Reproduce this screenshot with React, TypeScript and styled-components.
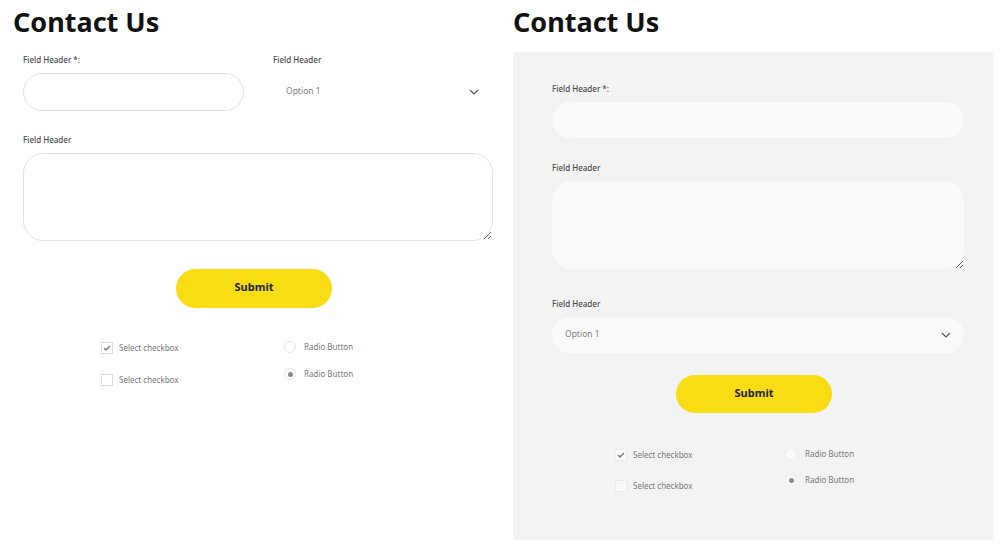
import styled, { createGlobalStyle } from "styled-components";

const GlobalStyle = createGlobalStyle`
  body {
    margin: 0;
    background: #ffffff;
    font-family: "Noto Sans", "Open Sans", sans-serif;
  }
  * { box-sizing: border-box; }
`;

const Page = styled.div`
  display: flex;
  width: 1000px;
  height: 545px;
`;

const Column = styled.section`
  width: 500px;
  padding-left: 13px;
  display: flex;
  flex-direction: column;
`;

const Title = styled.h1`
  margin: 0 0 17px;
  padding-top: 8px;
  font-size: 27px;
  line-height: 27px;
  font-weight: 700;
  color: #111;
`;

const Form = styled.form<{ $variant: "plain" | "card" }>`
  display: flex;
  flex-direction: column;
  ${(p) =>
    p.$variant === "card"
      ? `
    width: 480px;
    height: 488px;
    background: #f3f3f3;
    padding: 32px 29px 0 39px;
  `
      : `
    width: 480px;
    padding: 3px 0 0 10px;
  `}
`;

const Row = styled.div`
  display: grid;
  grid-template-columns: 221px 220px;
  column-gap: 29px;
`;

const Field = styled.div<{ $mb: number }>`
  display: flex;
  flex-direction: column;
  margin-bottom: ${(p) => p.$mb}px;
`;

const Label = styled.label`
  font-size: 8px;
  line-height: 10px;
  font-weight: 500;
  color: #4a4a4a;
  margin-bottom: 8px;
`;

const TextInput = styled.input<{ $filled: boolean; $h: number }>`
  height: ${(p) => p.$h}px;
  width: 100%;
  border-radius: 999px;
  border: ${(p) => (p.$filled ? "none" : "1px solid #e2e2e2")};
  background: ${(p) => (p.$filled ? "#fafafa" : "#fff")};
  outline: none;
  padding: 0 14px;
  font: inherit;
`;

const TextArea = styled.textarea<{ $filled: boolean; $w: number }>`
  display: block;
  width: ${(p) => p.$w}px;
  height: 88px;
  border-radius: 20px;
  border: ${(p) => (p.$filled ? "none" : "1px solid #e2e2e2")};
  background: ${(p) => (p.$filled ? "#fafafa" : "#fff")};
  outline: none;
  padding: 12px 14px;
  font: inherit;
  resize: both;
`;

const SelectWrap = styled.div`
  position: relative;
  width: 100%;
`;

const Select = styled.select<{ $filled: boolean; $h: number }>`
  appearance: none;
  width: 100%;
  height: ${(p) => p.$h}px;
  border: none;
  border-radius: 999px;
  background: ${(p) => (p.$filled ? "#fafafa" : "#fff")};
  padding: 0 13px 3px;
  font-family: inherit;
  font-size: 8.5px;
  font-weight: 400;
  color: #808080;
  outline: none;
`;

const Chevron = styled.svg<{ $right: number }>`
  position: absolute;
  right: ${(p) => p.$right}px;
  top: 50%;
  margin-top: -3px;
  pointer-events: none;
`;

const SubmitButton = styled.button<{ $h: number }>`
  align-self: center;
  margin-left: -8px;
  width: 156px;
  height: ${(p) => p.$h}px;
  border: none;
  border-radius: 999px;
  background: #f8dc14;
  color: #222;
  font-family: inherit;
  font-size: 11px;
  line-height: 1;
  font-weight: 700;
  padding: 0 0 4px;
`;

const Options = styled.div<{ $left: number; $col: number; $mt: number }>`
  display: grid;
  grid-template-columns: ${(p) => p.$col}px auto;
  padding-left: ${(p) => p.$left}px;
  margin-top: ${(p) => p.$mt}px;
`;

const OptionList = styled.div<{ $gap: number; $shift: number }>`
  display: flex;
  flex-direction: column;
  gap: ${(p) => p.$gap}px;
  margin-top: ${(p) => p.$shift}px;
`;

const OptionItem = styled.div<{ $gap: number }>`
  display: flex;
  align-items: center;
  gap: ${(p) => p.$gap}px;
  font-size: 8px;
  line-height: 12px;
  font-weight: 400;
  color: #7a7a7a;
`;

const Box = styled.span<{ $filled: boolean }>`
  width: 12px;
  height: 12px;
  border: 1px solid ${(p) => (p.$filled ? "#ececec" : "#dcdcdc")};
  background: ${(p) => (p.$filled ? "#fafafa" : "#fff")};
  display: flex;
  align-items: center;
  justify-content: center;
`;

const Circle = styled.span<{ $filled: boolean }>`
  width: 12px;
  height: 12px;
  border-radius: 50%;
  border: 1px solid ${(p) => (p.$filled ? "#f0f0f0" : "#e6e6e6")};
  background: ${(p) => (p.$filled ? "#fafafa" : "#fff")};
  display: flex;
  align-items: center;
  justify-content: center;
`;

const Dot = styled.span`
  width: 5px;
  height: 5px;
  border-radius: 50%;
  background: #8a8a8a;
`;

const ChevronIcon = ({ right }: { right: number }) => (
  <Chevron $right={right} width="10" height="6" viewBox="0 0 10 6">
    <path d="M1 1 L5 5 L9 1" fill="none" stroke="#555" strokeWidth="1.1" />
  </Chevron>
);

const Check = () => (
  <svg width="8" height="6" viewBox="0 0 8 6">
    <path d="M1 3 L3 5 L7 1" fill="none" stroke="#777" strokeWidth="1.4" />
  </svg>
);

type ChoicesProps = {
  filled: boolean;
  left: number;
  col: number;
  mt: number;
  checkGap: number;
  radioGap: number;
};

const Choices = ({ filled, left, col, mt, checkGap, radioGap }: ChoicesProps) => (
  <Options $left={left} $col={col} $mt={mt}>
    <OptionList $gap={checkGap} $shift={0}>
      <OptionItem $gap={6}>
        <Box $filled={filled}>
          <Check />
        </Box>
        Select checkbox
      </OptionItem>
      <OptionItem $gap={6}>
        <Box $filled={filled} />
        Select checkbox
      </OptionItem>
    </OptionList>
    <OptionList $gap={radioGap} $shift={-1}>
      <OptionItem $gap={8}>
        <Circle $filled={filled} />
        Radio Button
      </OptionItem>
      <OptionItem $gap={8}>
        <Circle $filled={filled}>
          <Dot />
        </Circle>
        Radio Button
      </OptionItem>
    </OptionList>
  </Options>
);

export default function App() {
  return (
    <>
      <GlobalStyle />
      <Page>
        <Column>
          <Title>Contact Us</Title>
          <Form $variant="plain">
            <Row>
              <Field $mb={24}>
                <Label>Field Header *:</Label>
                <TextInput $filled={false} $h={38} />
              </Field>
              <Field $mb={24}>
                <Label>Field Header</Label>
                <SelectWrap>
                  <Select $filled={false} $h={38} defaultValue="1">
                    <option value="1">Option 1</option>
                    <option value="2">Option 2</option>
                  </Select>
                  <ChevronIcon right={14} />
                </SelectWrap>
              </Field>
            </Row>
            <Field $mb={28}>
              <Label>Field Header</Label>
              <TextArea $filled={false} $w={470} />
            </Field>
            <SubmitButton type="button" $h={39}>
              Submit
            </SubmitButton>
            <Choices filled={false} left={78} col={183} mt={34} checkGap={20} radioGap={15} />
          </Form>
        </Column>
        <Column>
          <Title>Contact Us</Title>
          <Form $variant="card">
            <Field $mb={25}>
              <Label>Field Header *:</Label>
              <TextInput $filled $h={36} />
            </Field>
            <Field $mb={30}>
              <Label>Field Header</Label>
              <TextArea $filled $w={412} />
            </Field>
            <Field $mb={22}>
              <Label>Field Header</Label>
              <SelectWrap>
                <Select $filled $h={36} defaultValue="1">
                  <option value="1">Option 1</option>
                  <option value="2">Option 2</option>
                </Select>
                <ChevronIcon right={13} />
              </SelectWrap>
            </Field>
            <SubmitButton type="button" $h={38}>
              Submit
            </SubmitButton>
            <Choices filled left={63} col={170} mt={36} checkGap={19} radioGap={14} />
          </Form>
        </Column>
      </Page>
    </>
  );
}
